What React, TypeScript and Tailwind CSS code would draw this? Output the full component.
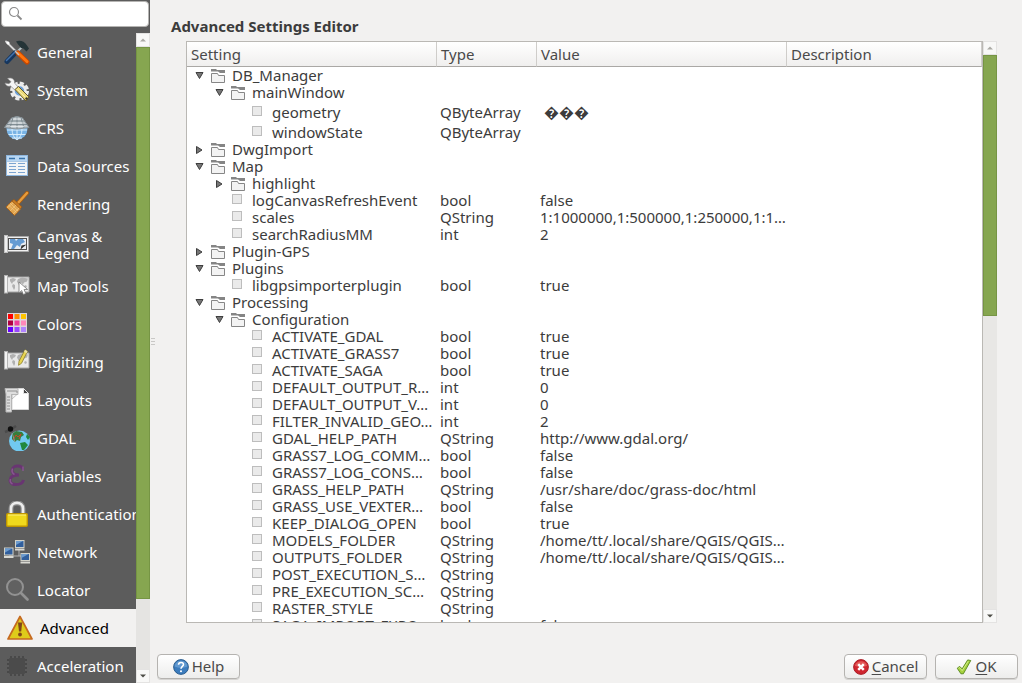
import React from "react";

type RowData = {
  name: string;
  depth: number;
  kind: "open" | "closed" | "leaf";
  type?: string;
  value?: string;
  tall?: boolean;
};

const leaf = (name: string, depth: number, type: string, value = "", tall = false): RowData => ({
  name,
  depth,
  kind: "leaf",
  type,
  value,
  tall,
});

const rows: RowData[] = [
  { name: "DB_Manager", depth: 0, kind: "open" },
  { name: "mainWindow", depth: 1, kind: "open" },
  leaf("geometry", 2, "QByteArray", "\u00A0\uFFFD\uFFFD\uFFFD", true),
  leaf("windowState", 2, "QByteArray", "", true),
  { name: "DwgImport", depth: 0, kind: "closed" },
  { name: "Map", depth: 0, kind: "open" },
  { name: "highlight", depth: 1, kind: "closed" },
  leaf("logCanvasRefreshEvent", 1, "bool", "false"),
  leaf("scales", 1, "QString", "1:1000000,1:500000,1:250000,1:1…"),
  leaf("searchRadiusMM", 1, "int", "2"),
  { name: "Plugin-GPS", depth: 0, kind: "closed" },
  { name: "Plugins", depth: 0, kind: "open" },
  leaf("libgpsimporterplugin", 1, "bool", "true"),
  { name: "Processing", depth: 0, kind: "open" },
  { name: "Configuration", depth: 1, kind: "open" },
  leaf("ACTIVATE_GDAL", 2, "bool", "true"),
  leaf("ACTIVATE_GRASS7", 2, "bool", "true"),
  leaf("ACTIVATE_SAGA", 2, "bool", "true"),
  leaf("DEFAULT_OUTPUT_R…", 2, "int", "0"),
  leaf("DEFAULT_OUTPUT_V…", 2, "int", "0"),
  leaf("FILTER_INVALID_GEO…", 2, "int", "2"),
  leaf("GDAL_HELP_PATH", 2, "QString", "http://www.gdal.org/"),
  leaf("GRASS7_LOG_COMM…", 2, "bool", "false"),
  leaf("GRASS7_LOG_CONS…", 2, "bool", "false"),
  leaf("GRASS_HELP_PATH", 2, "QString", "/usr/share/doc/grass-doc/html"),
  leaf("GRASS_USE_VEXTER…", 2, "bool", "false"),
  leaf("KEEP_DIALOG_OPEN", 2, "bool", "true"),
  leaf("MODELS_FOLDER", 2, "QString", "/home/tt/.local/share/QGIS/QGIS…"),
  leaf("OUTPUTS_FOLDER", 2, "QString", "/home/tt/.local/share/QGIS/QGIS…"),
  leaf("POST_EXECUTION_S…", 2, "QString"),
  leaf("PRE_EXECUTION_SC…", 2, "QString"),
  leaf("RASTER_STYLE", 2, "QString"),
  leaf("SAGA_IMPORT_EXPO…", 2, "bool", "false"),
];

const indents = ["pl-1", "pl-6", "pl-11"];

function Svg({ children, className = "h-[26px] w-[26px]" }: { children: React.ReactNode; className?: string }) {
  return (
    <svg viewBox="0 0 26 26" className={`shrink-0 ${className}`} aria-hidden="true">
      {children}
    </svg>
  );
}

function MapSheet() {
  return (
    <>
      <path d="M2.500 4h22.500v15H2.500z" fill="#e9e9e9" stroke="#a5a5a5" />
      <rect x="0.500" y="2.500" width="3" height="17.500" fill="#f3f3f3" stroke="#b5b5b5" />
      <path d="M6 6l3-1 3 1-1 2-2 1-1 2-2-3zM9 11l2 1v3l-1 2-2-4zM14 6l4-1.500 6 1-1 3-3 1-1 2-2-2-1 4-2-3-1-2zM21 12l2 1-1 2-2-1z" fill="#b1b1b1" />
    </>
  );
}

const icons: Record<string, React.ReactNode> = {
  General: (
    <Svg>
      <path d="M2 2.500l10 10" stroke="#d9d9d9" strokeWidth="1.800" strokeLinecap="round" />
      <path d="M3 3l2 2" stroke="#fff" strokeWidth="2.500" />
      <path d="M13 13L20 6" stroke="#b8c3c8" strokeWidth="2" />
      <path d="M12 2.500c4-1.500 8-.5 11 4l2 3-2.500 3-3-3-2.500-.5-2.500-3z" fill="#253437" />
      <path d="M11 14l-8 8.500" stroke="#17375e" strokeWidth="5" strokeLinecap="round" />
      <path d="M10.500 13.500l-8 8" stroke="#4473ad" strokeWidth="1.500" strokeLinecap="round" />
      <path d="M14 14l9 9" stroke="#c84800" strokeWidth="5" strokeLinecap="round" />
      <path d="M14 14l9 8.500" stroke="#ff750d" strokeWidth="3" strokeLinecap="round" />
      <path d="M11 12l4 4" stroke="#c6c6c6" strokeWidth="1.500" />
    </Svg>
  ),
  System: (
    <Svg>
      <circle cx="15.500" cy="14" r="8" fill="none" stroke="#ececec" strokeWidth="3" strokeDasharray="4.200 2.080" />
      <circle cx="15.500" cy="14" r="6" fill="#6ea0d7" stroke="#ececec" strokeWidth="2.500" />
      <path d="M3.500 1.500C7 0 11 2 10.500 6l4.500 5-3 3-5.500-5C3.500 10 1.500 8 1 6l4 .7 2-2z" fill="#f5f5f5" stroke="#888" strokeWidth=".7" />
      <path d="M11 12.500l3.500-3L25 20l-3 4z" fill="#edda79" stroke="#665a2a" />
      <path d="M13.500 12.500l8.500 8.500" stroke="#f7ecb0" strokeWidth="1" />
      <circle cx="22.500" cy="21.500" r="1.200" fill="#38342a" />
    </Svg>
  ),
  CRS: (
    <Svg>
      <circle cx="13" cy="14" r="10.500" fill="#78b3e5" />
      <path d="M3 15h20M4.500 19.500h17M8 23h10M13 13v12M8 14c0 5 2 9 5 11M18 14c0 5-2 9-5 11" fill="none" stroke="#d7edfc" />
      <path d="M7.500 3q5.500-3 11 0l6.500 9.500q-12 3-24.500 0z" fill="#bfc6cb" stroke="#89949b" />
      <path d="M5 6h16M3 9.500h20M13 2v12M9 3L6 13M17 3l3 10" fill="none" stroke="#718087" strokeWidth=".8" />
      <path d="M9 4h8M7 8h12M6 11.500h14" stroke="#f2f6f8" strokeWidth=".7" />
    </Svg>
  ),
  "Data Sources": (
    <Svg>
      <rect x="2.500" y="2.500" width="21" height="20" fill="#f3f5f7" stroke="#8fb6dd" />
      <path d="M3 3h20v5H3z" fill="#b8d7f4" />
      <path d="M5 5.500h6M15 5.500h6" stroke="#3973aa" strokeWidth="1.500" />
      <path d="M5 10.500h7M14 10.500h7M5 13.500h7M14 13.500h7M5 16.500h7M14 16.500h7M5 19.500h7M14 19.500h7" stroke="#7da5d1" strokeWidth="1.200" />
      <path d="M3 8.500h20" stroke="#8fb6dd" strokeWidth=".7" />
    </Svg>
  ),
  Rendering: (
    <Svg>
      <path d="M23 2l-9 10" stroke="#a85c10" strokeWidth="4" strokeLinecap="round" />
      <path d="M23 2l-9 10" stroke="#e69c3c" strokeWidth="2.400" strokeLinecap="round" />
      <path d="M10 8.500l8 7.500-2 2-8.500-8z" fill="#cb7d22" stroke="#955414" strokeWidth=".7" />
      <path d="M8 10l8.500 8-6 6.500L2 16z" fill="#e1a44d" stroke="#a86520" />
      <path d="M6 12l8 8M4.500 14l8 7.500M9 12l-6 5M12 14l-6 6M15 17l-6 6" stroke="#f4cc8b" strokeWidth=".6" />
    </Svg>
  ),
  "Canvas & Legend": (
    <Svg>
      <path d="M3.500 4.500h21v15h-21z" fill="#f0f0f0" stroke="#a9a9a9" />
      <rect x=".5" y="3.500" width="3" height="17" fill="#efefef" stroke="#c3c3c3" />
      <rect x="4.500" y="6.500" width="18" height="11" fill="#e9edf2" stroke="#515151" />
      <path d="M6 7h5l1 2 2-2h5l2 3-4 2-1 3-3-2-3 4H7l2-5-3-1z" fill="#659bd2" />
      <path d="M16.500 17.500l1-4 5-1z" fill="#303030" />
    </Svg>
  ),
  "Map Tools": (
    <Svg>
      <MapSheet />
      <path d="M15 9v11l2.700-2.500 1.600 4 2.500-1-1.700-4h3.500z" fill="#fff" stroke="#777" strokeWidth=".8" />
    </Svg>
  ),
  Colors: (
    <Svg>
      <path d="M3 2h20v20H3z" fill="#ddd6da" />
      <path d="M4 3h5v5H4z" fill="#ff0000" /><path d="M10.500 3h5v5h-5z" fill="#ff8d00" /><path d="M17 3h5v5h-5z" fill="#ffc400" />
      <path d="M4 9.500h5v5H4z" fill="#b00042" /><path d="M10.500 9.500h5v5h-5z" fill="#ec3c99" /><path d="M17 9.500h5v5h-5z" fill="#ff87ba" />
      <path d="M4 16h5v5H4z" fill="#6700ff" /><path d="M10.500 16h5v5h-5z" fill="#9847ff" /><path d="M17 16h5v5h-5z" fill="#b083ff" />
    </Svg>
  ),
  Digitizing: (
    <Svg>
      <MapSheet />
      <path d="M21 .8l2.500 1.500-6 12-3 2 .5-4z" fill="#e8d552" stroke="#8d7f27" strokeWidth=".8" />
      <path d="M21 .8l2.500 1.500-1 2L20 2.800z" fill="#e8dfa8" />
    </Svg>
  ),
  Layouts: (
    <Svg>
      <path d="M8 1.500h11.500l5 5v16H8z" fill="#fff" stroke="#d6d6d6" />
      <path d="M19.500 1.500v5h5z" fill="#454545" stroke="#e5e5e5" />
      <path d="M1 1.500h13v6H7.500V25H2V7z" fill="#dedede" stroke="#b7b7b7" />
      <path d="M3 4h10v2M3 10h3M3 13h3M3 16h3M3 19h3M3 22h3" fill="none" stroke="#929292" />
      <path d="M8 7.500h5L8 12z" fill="#f2f2f2" stroke="#aaa" strokeWidth=".7" />
    </Svg>
  ),
  GDAL: (
    <Svg>
      <circle cx="15.500" cy="16" r="10.500" fill="#71c9f0" />
      <path d="M8 9l4-3 6 1 2 3-3 2-1 4-3-1-2 2-3-3z" fill="#387c3b" />
      <path d="M16 18l5-1 3 3-4 5h-2zM23 9l3 3-2 3-2-3z" fill="#21883e" />
      <path d="M9 15l3-5 2 2 3-3-2 5" fill="none" stroke="#c4472a" />
      <path d="M1 7l5-2 6-4" stroke="#4b4b4b" strokeWidth="2.500" />
      <circle cx="6.500" cy="4" r="2.700" fill="#101010" />
      <path d="M8 8l3 9" stroke="#9b9b9b" strokeWidth=".8" />
    </Svg>
  ),
  Variables: (
    <Svg>
      <path d="M19 6.500C18 1.500 8 2 8 7.500c0 3.500 3 4.500 7 4.500-5 0-9 1.500-9 5.500C6 23 18 23 19.500 17" fill="none" stroke="#693572" strokeWidth="3" />
      <path d="M19 3.500v4.500M8.500 5.500c-1 3 0 5 2 6M6.500 16c-1 3 0 4 2 5" fill="none" stroke="#87578e" strokeWidth="1.500" />
    </Svg>
  ),
  Authentication: (
    <Svg>
      <path d="M7 14V7.500C7 0 19 0 19 7.500V14" fill="none" stroke="#888" strokeWidth="5" />
      <path d="M7 14V7.500C7 0 19 0 19 7.500V14" fill="none" stroke="#eee" strokeWidth="2.700" />
      <rect x="2.700" y="12.700" width="20.600" height="12.600" rx="1" fill="#efd91d" stroke="#bf9600" strokeWidth="1.400" />
      <path d="M4 14h18" stroke="#fff27b" />
    </Svg>
  ),
  Network: (
    <Svg>
      <path d="M5 17h15v3M15 10v7" fill="none" stroke="#b4b4b4" />
      {[[11, 1], [0, 8.5], [16.5, 14]].map(([x, y]) => (
        <g key={x} transform={`translate(${x} ${y})`}>
          <rect x=".5" y=".5" width="8.500" height="7" fill="#315f9d" stroke="#d2d2c9" />
          <path d="M1 1h7L1 5z" fill="#6d9ccf" />
          <path d="M0 8.500h9.500v2H0z" fill="#d9d9d3" />
        </g>
      ))}
    </Svg>
  ),
  Locator: (
    <Svg>
      <circle cx="11" cy="10" r="8" fill="#616161" stroke="#929292" strokeWidth="2" />
      <path d="M17 16l6.500 6.500" stroke="#929292" strokeWidth="2.700" strokeLinecap="round" />
    </Svg>
  ),
  Advanced: (
    <Svg>
      <path d="M13 1.500L25 24H1z" fill="#dfcb1a" stroke="#c66a20" strokeWidth="1.700" strokeLinejoin="round" />
      <path d="M11 7.500h4.200l-1 9h-2.200z" fill="#80461a" />
      <circle cx="13" cy="19.500" r="1.900" fill="#80461a" />
    </Svg>
  ),
  Acceleration: (
    <Svg>
      <path d="M7 3v20M11 3v20M15 3v20M19 3v20M3 7h20M3 11h20M3 15h20M3 19h20" stroke="#484848" strokeWidth="1.800" />
      <rect x="5" y="5" width="16" height="16" rx="1" fill="#4b4b4b" />
    </Svg>
  ),
};

function Arrow({ open }: { open: boolean }) {
  return (
    <svg viewBox="0 0 16 16" className="h-4 w-4 shrink-0" aria-hidden="true">
      {open ? (
        <path d="M5 4.500h7L8.500 10.500z" fill="#777" stroke="#3e3e3e" />
      ) : (
        <path d="M5.500 4.500v7l5.500-3.500z" fill="#777" stroke="#3e3e3e" />
      )}
    </svg>
  );
}

function Folder() {
  return (
    <svg viewBox="0 0 14 14" className="h-3.5 w-3.5 shrink-0" aria-hidden="true">
      <path d="M0 0h5l1 1h8v3H9L7 2.500H0z" fill="#858585" />
      <path d="M.5 4.500h6l1 2h6v7H.5z" fill="#f3f3f3" stroke="#868686" />
    </svg>
  );
}

function ScrollButton({ down = false, active = false }: { down?: boolean; active?: boolean }) {
  return (
    <button
      type="button"
      aria-label={down ? "Scroll down" : "Scroll up"}
      className="flex h-3.5 w-full shrink-0 items-center justify-center border border-[#e4e3e2] bg-[#f8f8f7]"
    >
      <svg viewBox="0 0 6 4" className="h-1 w-1.5" aria-hidden="true">
        <path d={down ? "M0 .5h6L3 3.500z" : "M0 3.500h6L3 .5z"} fill={active ? "#4c4c46" : "#aaa9a4"} />
      </svg>
    </button>
  );
}

function TreeRow({ row }: { row: RowData }) {
  const cell = `whitespace-nowrap p-0 ${row.tall ? "pt-[3px]" : ""}`;
  return (
    <tr className={row.tall ? "h-5" : "h-[17px]"}>
      <td className={`${cell} ${indents[row.depth]}`}>
        <div className="flex h-[17px] items-center">
          {row.kind === "leaf" ? (
            <span className="ml-[21px] mr-2.5 h-2.5 w-2.5 shrink-0 -translate-y-0.5 border border-[#bdbdbd] bg-[#eaeaea]" />
          ) : (
            <>
              <Arrow open={row.kind === "open"} />
              <span className="ml-1 mr-[7px]">
                <Folder />
              </span>
            </>
          )}
          {row.name}
        </div>
      </td>
      <td className={`${cell} pl-[3px]`}>{row.type}</td>
      <td className={`${cell} pl-[3px]`}>{row.value}</td>
      <td className={cell} />
    </tr>
  );
}

const dialogButton =
  "flex h-[25px] w-[83px] items-center justify-center gap-[3px] rounded border border-[#b5b3b0] bg-linear-to-b from-white to-[#ededec] text-[#4a4a4a] shadow-[0_1px_0_#d5d4d2]";

export default function App() {
  return (
    <div className="flex h-screen min-h-0 overflow-hidden bg-[#f2f1f0] font-['Noto_Sans','Noto_Sans_CJK_SC',sans-serif] text-[15px] leading-[17px] text-[#3c3c3c]">
      <aside className="flex w-[150px] shrink-0 flex-col bg-[#5c5c5c]">
        <div className="h-[33px] shrink-0 p-px">
          <label className="flex h-[26px] items-center rounded border border-[#b5b4b2] bg-white pl-1.5">
            <svg viewBox="0 0 16 16" className="h-4 w-4 shrink-0" aria-hidden="true">
              <circle cx="6" cy="6" r="4.500" fill="none" stroke="#8a8a8a" strokeWidth="1.200" />
              <path d="M9.500 9.500l4 4" stroke="#8a8a8a" strokeWidth="1.800" />
            </svg>
            <input type="text" aria-label="Search" className="w-full min-w-0 bg-transparent px-1 outline-none" />
          </label>
        </div>
        <div className="flex min-h-0 flex-1">
          <nav className="min-w-0 flex-1 overflow-hidden">
            {Object.keys(icons).map((label) => {
              const selected = label === "Advanced";
              return (
                <a
                  key={label}
                  href="#"
                  aria-current={selected ? "page" : undefined}
                  className={`flex items-center gap-[7px] ${label === "Canvas & Legend" ? "h-11" : "h-[38px]"} ${
                    selected ? "bg-[#f2f1f0] pl-[7px] text-black" : "pl-1 text-white"
                  } ${label.includes("&") ? "" : "whitespace-nowrap"}`}
                >
                  {icons[label]}
                  <span>{label}</span>
                </a>
              );
            })}
          </nav>
          <div className="flex w-3.5 shrink-0 flex-col bg-[#e5e4e2]">
            <ScrollButton />
            <div className="w-full flex-[552] border border-[#769544] bg-[#86a650]" />
            <div className="flex-[70]" />
            <ScrollButton down active />
          </div>
        </div>
      </aside>

      <div className="flex w-[7px] shrink-0 flex-col justify-center gap-0.5">
        <span className="ml-px h-px w-1 bg-[#c9c8c6]" />
        <span className="ml-px h-px w-1 bg-[#c9c8c6]" />
        <span className="ml-px h-px w-1 bg-[#c9c8c6]" />
      </div>

      <main className="flex min-w-0 flex-1 flex-col pb-1 pr-1 pt-[18px]">
        <h1 className="ml-3.5 shrink-0 font-bold">Advanced Settings Editor</h1>
        <section className="ml-[29px] mr-[21px] mt-1.5 flex min-h-0 flex-1">
          <div className="min-w-0 flex-1 overflow-hidden border border-[#bab8b4] bg-white">
            <table className="w-full table-fixed border-separate border-spacing-0">
              <colgroup>
                <col className="w-[250px]" />
                <col className="w-[100px]" />
                <col className="w-[250px]" />
                <col />
              </colgroup>
              <thead>
                <tr className="h-[25px]">
                  {["Setting", "Type", "Value", "Description"].map((h) => (
                    <th
                      key={h}
                      scope="col"
                      className="border-b border-r border-b-[#aaa8a5] border-r-[#cfcdca] bg-linear-to-b from-white to-[#f0efee] py-0 pl-1 pr-0 text-left font-normal text-[#4a4a4a]"
                    >
                      {h}
                    </th>
                  ))}
                </tr>
              </thead>
              <tbody>
                {rows.map((row) => (
                  <TreeRow key={row.name} row={row} />
                ))}
              </tbody>
            </table>
          </div>
          <div className="flex w-3.5 shrink-0 flex-col bg-[#e8e7e5]">
            <ScrollButton />
            <div className="w-full flex-[260] border border-[#769544] bg-[#86a650]" />
            <div className="flex-[294]" />
            <ScrollButton down active />
          </div>
        </section>
        <footer className="mt-[31px] flex shrink-0 gap-2">
          <button type="button" className={`${dialogButton} mr-auto`}>
            <Svg className="h-4 w-4">
              <circle cx="13" cy="13" r="12" fill="#3c7cbd" stroke="#245789" strokeWidth="1.500" />
              <path d="M2.500 12C4 0 22 0 23.500 12 17 15 9 15 2.500 12z" fill="#74a9da" opacity=".65" />
              <path d="M9 9.500c0-5 8-5 8-.5 0 3-4 3-4 7" fill="none" stroke="#fff" strokeWidth="2.500" />
              <circle cx="13" cy="20" r="1.700" fill="#fff" />
            </Svg>
            Help
          </button>
          <button type="button" className={dialogButton}>
            <Svg className="h-4 w-4">
              <circle cx="13" cy="13" r="12" fill="#cf2630" stroke="#a61821" strokeWidth="1.500" />
              <path d="M3 11C5 1 21 1 23 11 17 14 9 14 3 11z" fill="#ee7a72" opacity=".6" />
              <path d="M8.500 8.500l9 9M17.500 8.500l-9 9" stroke="#fff" strokeWidth="4" />
            </Svg>
            <span>
              <span className="underline underline-offset-2">C</span>ancel
            </span>
          </button>
          <button type="button" className={dialogButton}>
            <Svg className="h-4 w-4">
              <path d="M2 15l4-3 4 4L19 1.500l5 1L12 24H8z" fill="#a5d13d" stroke="#58891d" strokeWidth="1.500" strokeLinejoin="round" />
              <path d="M4 15l2-1 4 5L20 3.500" fill="none" stroke="#d4ec8e" strokeWidth="1.500" />
            </Svg>
            <span>
              <span className="underline underline-offset-2">O</span>K
            </span>
          </button>
        </footer>
      </main>
    </div>
  );
}
